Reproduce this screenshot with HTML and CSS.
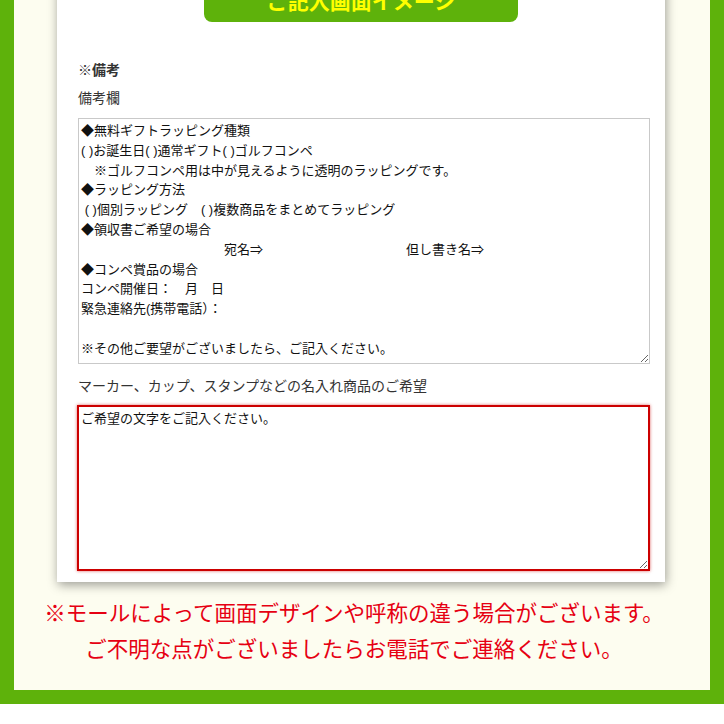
FILE: index.html
```html
<!DOCTYPE html>
<html lang="ja">
<head>
    <meta charset="UTF-8">
    <meta name="viewport" content="width=device-width, initial-scale=1.0">
    <title>ご記入画面イメージ</title>
    <link rel="stylesheet" href="styles.css">
</head>
<body>
    <div class="frame">
        <div class="inner">
            <!-- Form preview card -->
            <div class="card">
                <div class="card-title">ご記入画面イメージ</div>

                <p class="field-head">※備考</p>
                <label class="field-label" for="memo">備考欄</label>
                <textarea id="memo" class="memo">◆無料ギフトラッピング種類
( )お誕生日( )通常ギフト( )ゴルフコンペ
　※ゴルフコンペ用は中が見えるように透明のラッピングです。
◆ラッピング方法
 ( )個別ラッピング　( )複数商品をまとめてラッピング
◆領収書ご希望の場合
　　　　　　　　　　　宛名⇒　　　　　　　　　　　但し書き名⇒
◆コンペ賞品の場合
コンペ開催日：　月　日
緊急連絡先(携帯電話）：

※その他ご要望がございましたら、ご記入ください。</textarea>

                <label class="field-label name-label" for="naire">マーカー、カップ、スタンプなどの名入れ商品のご希望</label>
                <textarea id="naire" class="naire">ご希望の文字をご記入ください。</textarea>
            </div>

            <!-- Notes -->
            <div class="notes">
                <p>※モールによって画面デザインや呼称の違う場合がございます。</p>
                <p>ご不明な点がございましたらお電話でご連絡ください。</p>
            </div>
        </div>
    </div>
</body>
</html>
```

FILE: styles.css
```css
body {
    margin: 0;
    padding: 0;
    background: #fff;
    font-family: "Liberation Sans", "Noto Sans CJK JP", sans-serif;
    color: #333;
}

.frame {
    margin-top: -30px;
    background: #5eb20b;
    padding: 0 14px 14px;
}

.inner {
    background: #fdfdf0;
    padding: 0 45px 24px 43px;
}

.card {
    background: #fff;
    padding: 0 15px 11px 21px;
    box-shadow: 1px 3px 10px rgba(0, 0, 0, 0.38);
}

.card-title {
    width: 314px;
    height: 52px;
    margin: 0 auto;
    margin-left: 126px;
    background: #5eb20b;
    border-radius: 8px;
    color: #ffff00;
    font-family: "Noto Sans CJK JP", sans-serif;
    font-weight: 700;
    font-size: 21px;
    line-height: 60px;
    text-align: center;
    overflow: hidden;
}

.field-head {
    margin: 38px 0 0;
    font-size: 14px;
    font-weight: 700;
    line-height: 20px;
}

.field-label {
    display: block;
    margin-top: 8px;
    font-size: 14px;
    line-height: 20px;
}

.name-label {
    margin-top: 12px;
}

textarea {
    display: block;
    box-sizing: border-box;
    margin: 10px 0 0;
    padding: 2px 2px;
    font-family: "Liberation Sans", "Noto Sans CJK JP", sans-serif;
    font-size: 13px;
    line-height: 19.8px;
    color: #111;
    background: #fff;
    outline: none;
}

.memo {
    width: 572px;
    height: 246px;
    border: 1px solid #c9c9c9;
}

.naire {
    width: 573px;
    height: 166px;
    margin: 9px 0 0 -1px;
    border: 2px solid #cc0000;
    box-shadow: 0 0 3px rgba(204, 0, 0, 0.6);
}

.notes {
    margin-top: 12px;
    text-align: center;
    color: #e60012;
    font-family: "Noto Sans CJK JP", sans-serif;
    font-size: 21.5px;
    line-height: 36px;
}

.notes p {
    margin: 0;
    margin-left: -14px;
}
```
